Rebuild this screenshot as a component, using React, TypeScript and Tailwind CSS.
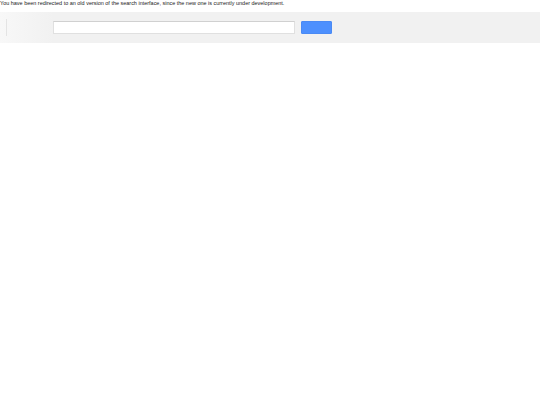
export default function App() {
  return (
    <div className="w-[540px] h-[405px] bg-white" style={{ fontFamily: '"Liberation Sans", Arial, sans-serif' }}>
      <div className="h-[12px] text-[5.48px] leading-[7px] text-[#222]">
        You have been redirected to an old version of the search interface, since the new one is currently under development.
      </div>
      <div className="h-[31px] bg-[#f1f1f1] flex items-center">
        <div className="w-[53px] h-full flex items-center bg-gradient-to-r from-[#f8f8f8] to-[#f1f1f1]">
          <div className="ml-[6px] w-[1px] h-[17px] bg-[#e4e4e4]" />
        </div>
        <div className="w-[242px] h-[13px] bg-white border border-[#e0e0e0] border-t-[#d0d0d0]" />
        <div className="ml-[6px] w-[31px] h-[13px] bg-[#4d90fe] border border-[#4a8af4] rounded-[1px]" />
      </div>
    </div>
  );
}
